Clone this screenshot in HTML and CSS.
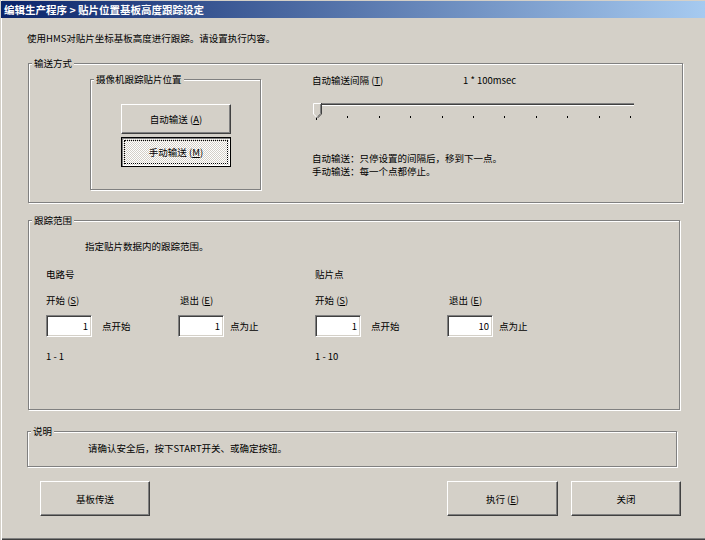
FILE: index.html
```html
<!DOCTYPE html>
<html lang="zh-CN">
<head>
    <meta charset="UTF-8">
    <title>贴片位置基板高度跟踪设定</title>
    <link rel="stylesheet" href="styles.css">
</head>
<body>
    <div class="window">
        <div class="titlebar">编辑生产程序 &gt; 贴片位置基板高度跟踪设定</div>

        <div class="content">
            <p class="intro">使用HMS对贴片坐标基板高度进行跟踪。请设置执行内容。</p>

            <!-- 输送方式 -->
            <div class="group group-transfer">
                <span class="group-label">输送方式</span>

                <div class="group group-camera">
                    <span class="group-label">摄像机跟踪贴片位置</span>
                    <button class="btn btn-mode">自动输送 (<u>A</u>)</button>
                    <button class="btn btn-mode btn-checked"><span class="focus">手动输送 (<u>M</u>)</span></button>
                </div>

                <div class="interval">
                    <div class="interval-head">
                        <span class="interval-label">自动输送间隔 (<u>T</u>)</span>
                        <span>1 * 100msec</span>
                    </div>
                    <div class="slider">
                        <div class="slider-track"></div>
                        <svg class="slider-thumb" width="9" height="15" viewBox="0 0 9 15">
                            <path d="M0 0H9V11L4.5 15L0 11Z" fill="#d4d0c8"/>
                            <path d="M0.5 11V0.5H8" fill="none" stroke="#fff"/>
                            <path d="M0.5 11L4.5 15" fill="none" stroke="#fff"/>
                            <path d="M8.5 0V11L4.5 15" fill="none" stroke="#404040"/>
                            <path d="M7.5 1V10.6L4.5 13.6" fill="none" stroke="#808080"/>
                        </svg>
                        <div class="ticks">
                            <i></i><i></i><i></i><i></i><i></i><i></i><i></i><i></i><i></i><i></i><i></i>
                        </div>
                    </div>
                    <div class="notes">
                        <p>自动输送：只停设置的间隔后，移到下一点。</p>
                        <p>手动输送：每一个点都停止。</p>
                    </div>
                </div>
            </div>

            <!-- 跟踪范围 -->
            <div class="group group-range">
                <span class="group-label">跟踪范围</span>
                <p class="range-hint">指定贴片数据内的跟踪范围。</p>

                <div class="range-cols">
                    <div class="range-col">
                        <p class="range-title">电路号</p>
                        <div class="fields">
                            <div class="field">
                                <label>开始 (<u>S</u>)</label>
                                <div class="field-row">
                                    <input type="text" value="1">
                                    <span class="unit">点开始</span>
                                </div>
                            </div>
                            <div class="field field-end">
                                <label>退出 (<u>E</u>)</label>
                                <div class="field-row">
                                    <input type="text" value="1">
                                    <span class="unit">点为止</span>
                                </div>
                            </div>
                        </div>
                        <p class="range-span">1 - 1</p>
                    </div>

                    <div class="range-col">
                        <p class="range-title">贴片点</p>
                        <div class="fields">
                            <div class="field">
                                <label>开始 (<u>S</u>)</label>
                                <div class="field-row">
                                    <input type="text" value="1">
                                    <span class="unit">点开始</span>
                                </div>
                            </div>
                            <div class="field field-end">
                                <label>退出 (<u>E</u>)</label>
                                <div class="field-row">
                                    <input type="text" value="10">
                                    <span class="unit">点为止</span>
                                </div>
                            </div>
                        </div>
                        <p class="range-span">1 - 10</p>
                    </div>
                </div>
            </div>

            <!-- 说明 -->
            <div class="group group-note">
                <span class="group-label">说明</span>
                <p class="note-text">请确认安全后，按下START开关、或确定按钮。</p>
            </div>

            <div class="actions">
                <button class="btn btn-action">基板传送</button>
                <button class="btn btn-action btn-exec">执行 (<u>E</u>)</button>
                <button class="btn btn-action btn-close">关闭</button>
            </div>
        </div>
    </div>
</body>
</html>
```

FILE: styles.css
```css
* {
    box-sizing: border-box;
}

body {
    margin: 0;
    background-color: #d4d0c8;
    color: #000;
    font-family: "Noto Sans CJK SC", "Noto Sans", sans-serif;
    font-size: 9.5px;
}

p {
    margin: 0;
}

.window {
    width: 705px;
    height: 540px;
    overflow: hidden;
    box-shadow: inset 1px 0 #d4d0c8, inset 2px 0 #fff, inset 0 -1px #404040, inset 0 -2px #808080;
}

.titlebar {
    height: 17px;
    margin: 1px 0 0 1px;
    padding-left: 3px;
    background: linear-gradient(to right, #0a246a, #a6caf0);
    color: #fff;
    font-weight: bold;
    font-size: 10.5px;
    line-height: 17px;
    white-space: pre;
}

.content {
    padding-left: 27px;
}

.intro {
    margin-top: 14px;
    line-height: 12px;
}

/* 分组框 */
.group {
    position: relative;
    border: 1px solid #808080;
    box-shadow: 1px 1px 0 #fff, inset 1px 1px 0 #fff;
}

.group-label {
    position: absolute;
    top: -7px;
    left: 3px;
    padding: 0 2px;
    background-color: #d4d0c8;
    line-height: 12px;
    white-space: nowrap;
}

.group-transfer {
    display: flex;
    align-items: flex-start;
    width: 655px;
    height: 140px;
    margin: 19px 0 0 1px;
}

.group-camera {
    display: flex;
    flex-direction: column;
    gap: 3px;
    width: 171px;
    height: 111px;
    margin: 15px 0 0 61px;
    padding: 24px 0 0 30px;
}

/* 按钮 */
.btn {
    display: flex;
    align-items: center;
    justify-content: center;
    padding: 0;
    font: inherit;
    color: #000;
    background-color: #d4d0c8;
    border: 1px solid;
    border-color: #fff #404040 #404040 #fff;
    box-shadow: inset -1px -1px #808080;
}

.btn-mode {
    width: 110px;
    height: 30px;
}

.btn-checked {
    border-color: #000;
    box-shadow: inset 1px 1px #808080, inset -1px -1px #fff;
    background: repeating-conic-gradient(#fff 0 25%, #d4d0c8 0 50%) 0 0 / 2px 2px;
}

.focus {
    display: flex;
    align-items: center;
    justify-content: center;
    width: 104px;
    height: 24px;
    border: 1px dotted #000;
}

/* 自动输送间隔 */
.interval {
    width: 330px;
    margin: 10px 0 0 51px;
}

.interval-head {
    display: flex;
    line-height: 12px;
}

.interval-label {
    width: 151px;
}

.slider {
    position: relative;
    width: 323px;
    height: 22px;
    margin-top: 17px;
}

.slider-track {
    width: 321px;
    height: 3px;
    margin: 4px 0 0 1px;
    background-color: #404040;
    border-top: 1px solid #808080;
    border-bottom: 1px solid #fff;
}

.slider-thumb {
    position: absolute;
    left: 1px;
    top: 0;
}

.ticks {
    display: flex;
    justify-content: space-between;
    align-items: flex-start;
    width: 315px;
    margin: 10px 0 0 4px;
}

.ticks i {
    width: 1px;
    height: 2px;
    background-color: #000;
}

.ticks i:first-child {
    height: 4px;
}

.notes {
    margin-top: 27px;
    line-height: 13px;
}

/* 跟踪范围 */
.group-range {
    width: 652px;
    height: 190px;
    margin: 17px 0 0 1px;
}

.range-hint {
    margin: 19px 0 0 56px;
    line-height: 12px;
}

.range-cols {
    display: flex;
    margin: 16px 0 0 17px;
}

.range-col {
    width: 269px;
}

.range-title {
    line-height: 12px;
}

.fields {
    display: flex;
    margin-top: 14px;
}

.field {
    width: 132px;
}

.field label {
    display: block;
    line-height: 12px;
}

.field-end label {
    padding-left: 2px;
}

.field-row {
    display: flex;
    align-items: center;
    margin-top: 9px;
}

.field input {
    width: 46px;
    height: 22px;
    padding: 0 3px 0 0;
    font: inherit;
    text-align: right;
    background-color: #fff;
    border: 1px solid;
    border-color: #808080 #fff #fff #808080;
    box-shadow: inset 1px 1px #404040, inset -1px -1px #d4d0c8;
    outline: none;
}

.unit {
    margin-left: 10px;
}

.field-end .unit {
    margin-left: 6px;
}

.range-span {
    margin-top: 13px;
    line-height: 12px;
}

/* 说明 */
.group-note {
    width: 650px;
    height: 36px;
    margin-top: 21px;
}

.note-text {
    margin: 10px 0 0 60px;
    line-height: 12px;
}

/* 底部按钮 */
.actions {
    display: flex;
    width: 641px;
    margin: 14px 0 0 13px;
}

.btn-action {
    width: 110px;
    height: 35px;
}

.btn-exec {
    width: 111px;
    margin-left: auto;
}

.btn-close {
    margin-left: 13px;
}
```
